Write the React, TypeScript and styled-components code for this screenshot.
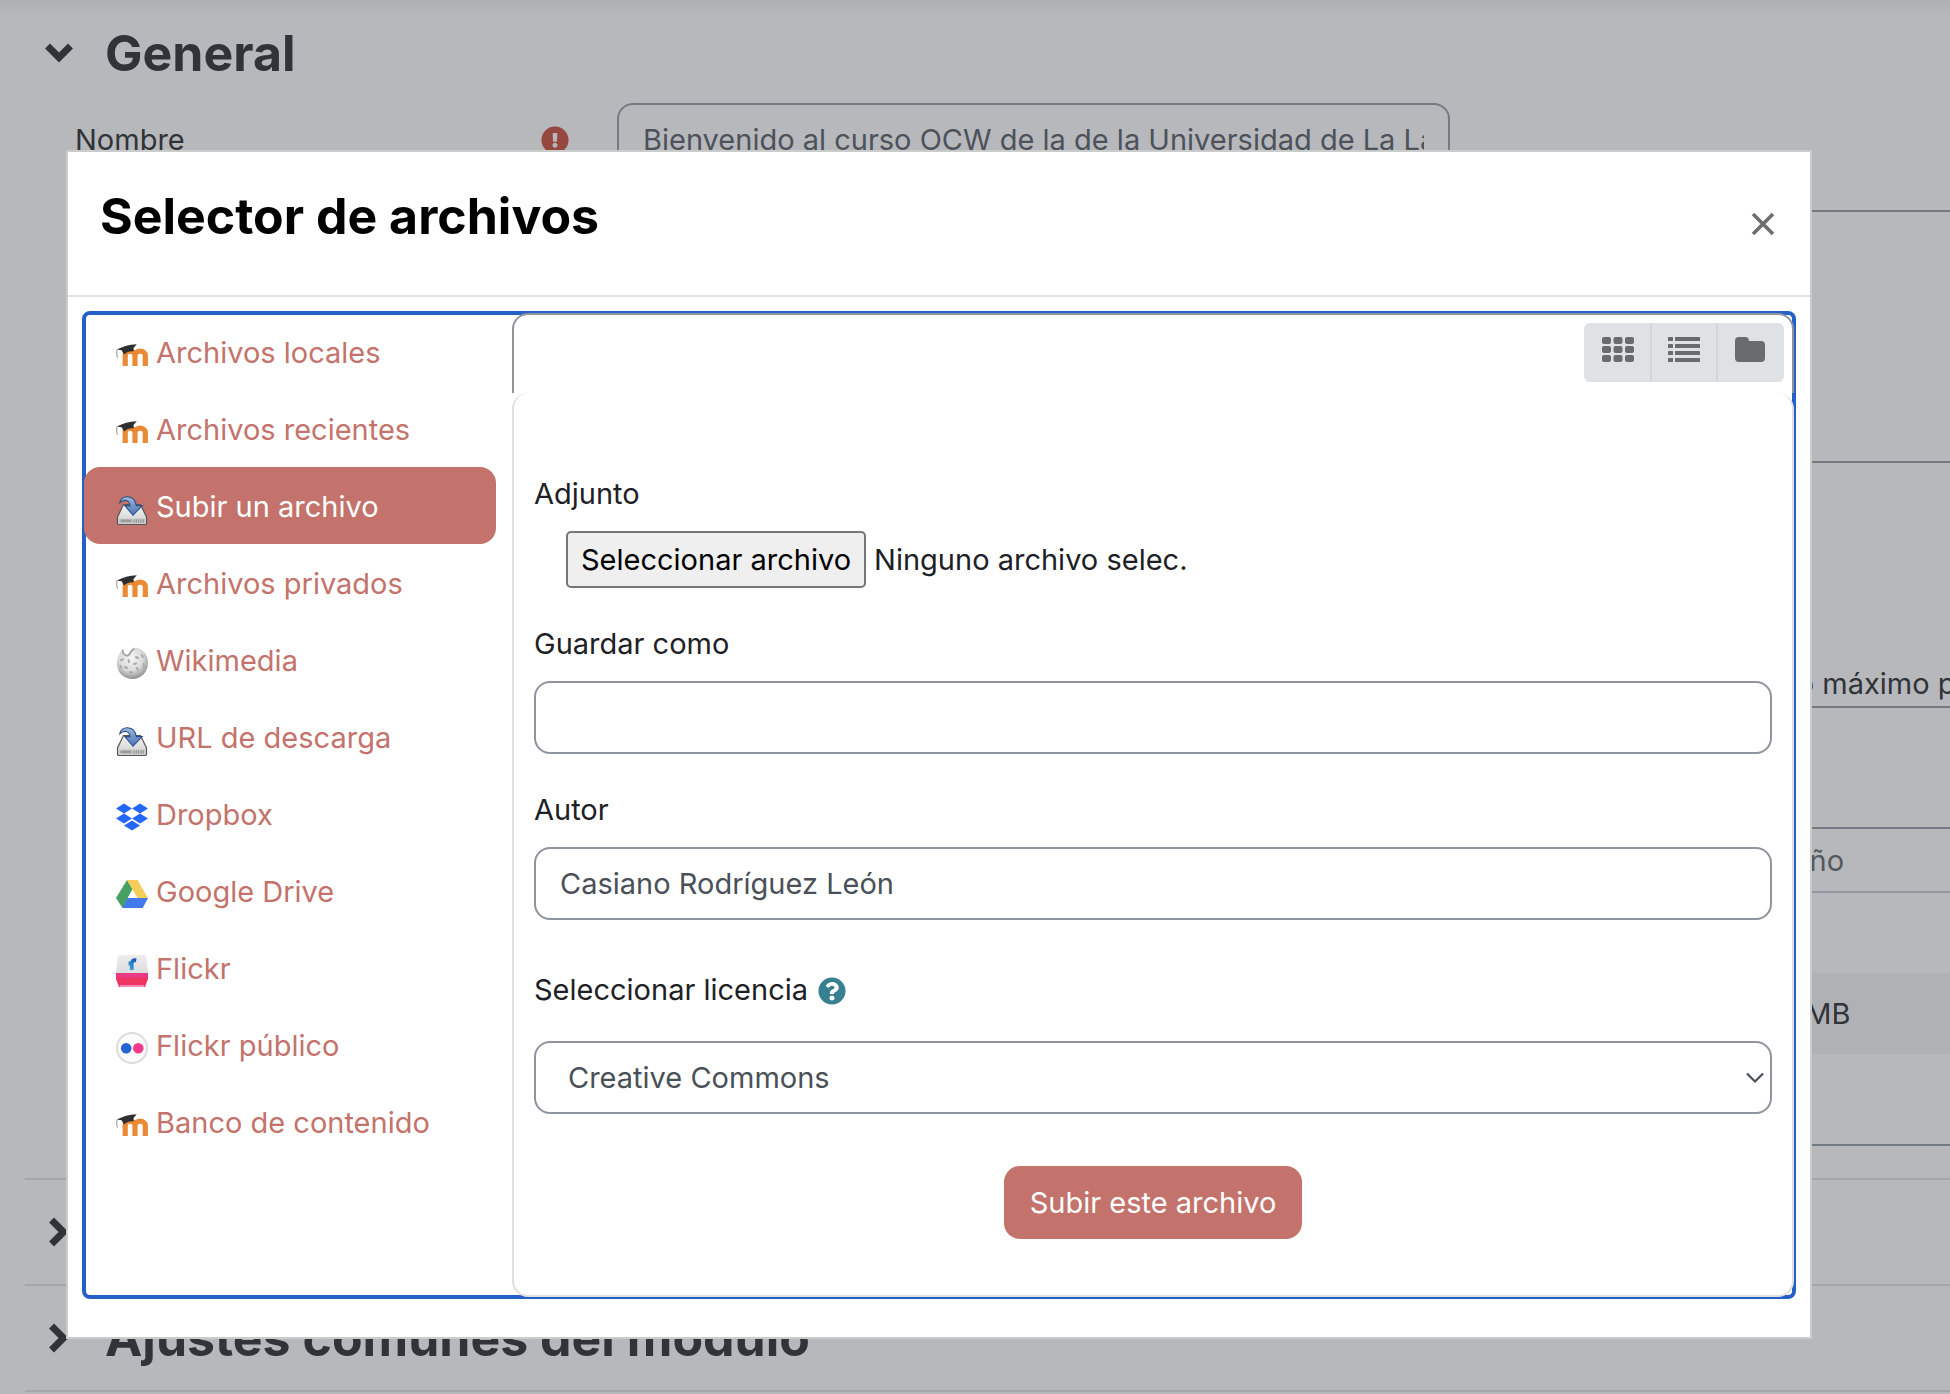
import React, { useState } from "react";
import styled, { createGlobalStyle } from "styled-components";
import { FaExclamationCircle, FaQuestionCircle } from "react-icons/fa";

const GlobalStyle = createGlobalStyle`
  *, *::before, *::after { box-sizing: border-box; }
  html, body { margin: 0; background: #b7b8bc; }
  body {
    font-family: Inter, "Liberation Sans", sans-serif;
    font-size: 29px;
    line-height: 45px;
    color: #1d2125;
    overflow: hidden;
  }
  input, select, button { font: inherit; }
`;

const accent = "#c3736b";
const fieldBorder = "#8f939e";
const dimBorder = "#747a82";
const dimRule = "#a4a6aa";
const dimText = "#303338";

const Page = styled.div`
  position: relative;
  min-height: 100vh;
  background: linear-gradient(#adaeb2, #b7b8bc 14px);
`;

/* ---------- settings form behind the dialog ---------- */

const Settings = styled.main`
  padding-left: 25px;
  color: ${dimText};
  overflow: hidden;
`;

const Section = styled.section<{ $ruled?: boolean }>`
  border-top: ${(p) => (p.$ruled ? `2px solid ${dimRule}` : "0")};
`;

const SectionHeader = styled.div<{ $open?: boolean }>`
  display: flex;
  align-items: center;
  gap: 27px;
  height: ${(p) => (p.$open ? 103 : 104)}px;
  padding-top: ${(p) => (p.$open ? 3 : 0)}px;
  padding-left: 17px;
`;

const SectionTitle = styled.h3`
  margin: 0;
  font-size: 50px;
  line-height: 64px;
  font-weight: 700;
  white-space: nowrap;
`;

const Toggle = styled.button`
  display: flex;
  align-items: center;
  justify-content: center;
  width: 36px;
  height: 36px;
  padding: 0;
  border: 0;
  background: none;
  color: inherit;
`;

const Fields = styled.div`
  display: grid;
  grid-template-columns: 494px 1fr;
  column-gap: 48px;
  padding: 0 0 32px 50px;
`;

const FieldName = styled.div`
  display: flex;
  align-items: center;
  justify-content: space-between;
  height: 73px;
`;

const Required = styled.span`
  display: flex;
  font-size: 28px;
  color: #96473f;
`;

const NameInput = styled.input`
  width: 833px;
  height: 73px;
  padding: 0 24px;
  border: 2px solid ${dimBorder};
  border-radius: 16px;
  background: transparent;
  color: #4c525a;
`;

const Wide = styled.div`
  grid-column: 2;
`;

const Editor = styled.div`
  height: 253px;
  margin-top: 34px;
  border: 2px solid ${dimBorder};
  border-right: 0;
`;

const SizeNote = styled.p`
  margin: 198px 0 0;
  padding-left: 1088px;
  white-space: nowrap;
`;

const FileManager = styled.div`
  border: 2px solid ${dimBorder};
  border-right: 0;
`;

const ManagerBar = styled.div`
  height: 121px;
  border-bottom: 2px solid ${dimBorder};
`;

const FileTable = styled.table`
  width: 100%;
  margin-bottom: 90px;
  border-collapse: collapse;
  table-layout: fixed;
  th, td { padding: 0; text-align: left; white-space: nowrap; }
  th { height: 63px; font-weight: 400; color: #54585e; border-bottom: 2px solid #929599; }
  td { height: 81px; }
  tbody tr:last-child { background: #b0b1b5; }
`;

const NameColumn = styled.col`
  width: 1116px;
`;

/* ---------- dialog ---------- */

const Overlay = styled.div`
  position: absolute;
  inset: 0;
  display: flex;
  align-items: flex-start;
  padding: 150px 138px 0 66px;
`;

const Dialog = styled.div`
  flex: 1;
  border: 2px solid #cacbcb;
  background: #fff;
`;

const DialogHeader = styled.header`
  display: flex;
  align-items: flex-start;
  justify-content: space-between;
  padding: 32px 23px 31px 32px;
  border-bottom: 2px solid #dee2e6;
`;

const DialogTitle = styled.h2`
  margin: 0;
  font-size: 50px;
  line-height: 64px;
  font-weight: 700;
  color: #000;
`;

const CloseButton = styled.button`
  display: flex;
  align-items: center;
  justify-content: center;
  width: 48px;
  height: 80px;
  padding: 0;
  border: 0;
  background: none;
`;

const DialogBody = styled.div`
  padding: 16px 16px 40px;
`;

const Picker = styled.div`
  display: flex;
  gap: 16px;
  border-radius: 6px;
  outline: 4px solid #2560c8;
  outline-offset: -2px;
`;

const Repositories = styled.nav`
  position: relative;
  width: 412px;
`;

const Repository = styled.a<{ $active: boolean }>`
  display: block;
  padding: 17px 32px 15px;
  border-radius: 16px;
  background: ${(p) => (p.$active ? accent : "transparent")};
  color: ${(p) => (p.$active ? "#fff" : accent)};
  text-decoration: none;
  white-space: nowrap;
  svg { width: 32px; height: 32px; margin-right: 8px; vertical-align: middle; }
`;

const Content = styled.div`
  position: relative;
  flex: 1;
  min-width: 0;
`;

const ViewBar = styled.div`
  display: flex;
  justify-content: flex-end;
  height: 80px;
  padding: 8px 8px 0;
  border: 2px solid ${fieldBorder};
  border-bottom: 0;
  border-radius: 16px 16px 0 0;
`;

const ViewGroup = styled.div`
  display: flex;
  height: 59px;
  padding-right: 2px;
  border-radius: 6px;
  background: #dee2e5;
  overflow: hidden;
`;

const ViewButton = styled.button`
  display: flex;
  align-items: flex-start;
  justify-content: center;
  width: 66px;
  padding: 14px 0 0;
  border: 0;
  border-left: 2px solid transparent;
  background: none;
  color: #6a6b6f;
  & + & { border-left-color: #d3d6d9; }
`;

const UploadForm = styled.form`
  display: flex;
  flex-direction: column;
  gap: 33px;
  padding: 78px 20px 56px;
  border: 2px solid #dfdfe0;
  border-top: 0;
  border-radius: 16px;
`;

const Field = styled.div`
  display: flex;
  flex-direction: column;
  gap: 15px;
`;

const LabelRow = styled.div`
  display: flex;
  align-items: center;
  gap: 10px;
  height: 73px;
`;

const HelpButton = styled.button`
  display: flex;
  padding: 2px 0 0;
  border: 0;
  background: none;
  font-size: 28px;
  color: #38808f;
`;

const FileRow = styled.div`
  display: flex;
  align-items: center;
  gap: 8px;
  padding-left: 32px;
`;

const HiddenFile = styled.input`
  position: absolute;
  width: 1px;
  height: 1px;
  opacity: 0;
`;

const FileButton = styled.label`
  padding: 4px 13px;
  border: 2px solid #767676;
  border-radius: 5px;
  background: #efefef;
  color: #000;
`;

const TextInput = styled.input`
  width: 100%;
  height: 73px;
  padding: 0 24px;
  border: 2px solid ${fieldBorder};
  border-radius: 16px;
  background: #fff;
  color: #495057;
`;

const SelectBox = styled.div`
  position: relative;
  svg { position: absolute; right: 7px; top: 30px; pointer-events: none; }
`;

const Select = styled.select`
  display: block;
  width: 100%;
  height: 73px;
  padding: 0 32px;
  appearance: none;
  border: 2px solid ${fieldBorder};
  border-radius: 16px;
  background: #fff;
  color: #495057;
`;

const Submit = styled.button`
  align-self: center;
  height: 73px;
  margin-top: 19px;
  padding: 0 26px;
  border: 0;
  border-radius: 16px;
  background: ${accent};
  color: #fff;
`;

/* ---------- drawings ---------- */

const Chevron = ({ down }: { down?: boolean }) => (
  <svg width="30" height="30" viewBox="0 0 30 30" fill="none" stroke="currentColor" strokeWidth="7" strokeLinecap="square" aria-hidden="true">
    <path d={down ? "M5 10.500l9 9 9-9" : "M9 5.500l9.500 9.500-9.500 9.500"} />
  </svg>
);

const MoodleIcon = () => (
  <svg viewBox="0 0 32 32" aria-hidden="true">
    <path d="M9.200 27V16.500C9.200 10.700 19 10.700 19 16.500V27M19 16.500C19 10.700 29.300 10.700 29.300 16.500V27" fill="none" stroke="#ea8a35" strokeWidth="5.200" />
    <path d="M.8 10.600C7 7.200 13 5.600 20.800 5.200L17.500 9l.2 3.300c-3.600-.4-7.400.8-9.700 3.200L5.600 11.200z" fill="#2f2f31" />
    <path d="M1.200 10.500c-.7 2.500-.7 5.500.3 8" fill="none" stroke="#8b7a6b" strokeWidth=".9" />
  </svg>
);

const DiskIcon = () => (
  <svg viewBox="0 0 32 32" aria-hidden="true">
    <defs>
      <linearGradient id="diskTop" x1="0" y1="0" x2="0" y2="1">
        <stop offset="0" stopColor="#f4f4f4" /><stop offset="1" stopColor="#cfcfcf" />
      </linearGradient>
      <linearGradient id="arrowBlue" x1="0" y1="0" x2="0" y2="1">
        <stop offset="0" stopColor="#9db8df" /><stop offset="1" stopColor="#4a73b3" />
      </linearGradient>
    </defs>
    <path d="M7.500 11.500h17L30.500 24v6.300q0 1.200-1.200 1.200H2.700q-1.200 0-1.200-1.200V24z" fill="url(#diskTop)" stroke="#55575a" strokeWidth="1.200" />
    <path d="M3 25.500h26v4.800H3z" fill="#c9c9c9" />
    <path d="M4.500 26.500h11v2.800h-11z" fill="#9b9b9b" />
    <path d="M18 26.300v3.400M20.300 26.300v3.400M22.600 26.300v3.400M24.900 26.300v3.400M27.200 26.300v3.400" stroke="#88898b" strokeWidth="1" />
    <path d="M3.800 9.800C4.500 1.600 18.600.8 20.300 12.600h5.900L17 22.300 8.800 12.600h5.200C13.300 7 8 5.600 3.800 9.800z" fill="url(#arrowBlue)" stroke="#2c4d86" strokeWidth="1.100" />
  </svg>
);

const WikimediaIcon = () => (
  <svg viewBox="0 0 32 32" aria-hidden="true">
    <defs>
      <radialGradient id="globe" cx=".45" cy=".35" r=".65">
        <stop offset="0" stopColor="#f5f5f5" /><stop offset=".6" stopColor="#dadada" /><stop offset="1" stopColor="#8f8f8f" />
      </radialGradient>
    </defs>
    <path d="M7 2.500c-1.500 3 1.500 6.500 4.500 6S14 3 19.500.6C27.500 2 32 9 32 16c0 9-7 16-15.500 16S1 25.500 1 17C1 11 3 5.500 7 2.500z" fill="url(#globe)" />
    <path d="M7 2.500c-1.500 3 1.500 6.500 4.500 6S14 3 18.500 1.500" fill="none" stroke="#a2a2a2" strokeWidth="1.800" />
    <path d="M5 13l2-.5M12.500 13l.5 2M20 10l2 1M25.500 8l1.500 2M9 20l2 1M4.500 19l.8 2M18 17l2-.5M21 21l.8 2M27.500 17l.5 3M14 25l2 .5" stroke="#a9a9a9" strokeWidth="2" strokeLinecap="round" />
  </svg>
);

const DropboxIcon = () => (
  <svg viewBox="0 0 32 32" fill="#2466f6" aria-hidden="true">
    <path d="M8 2.400l8 5-8 5-8-5zM24 2.400l8 5-8 5-8-5zM8 12.600l8 5-8 5-8-5zM24 12.600l8 5-8 5-8-5zM16 19.500l8 5-8 5-8-5z" />
  </svg>
);

const DriveIcon = () => (
  <svg viewBox="0 0 32 32" aria-hidden="true">
    <path d="M11 2l5.500 9L6.500 30 0 20z" fill="#46a061" />
    <path d="M11 2h10.500L32 20H21.500z" fill="#f5cd58" />
    <path d="M11.500 20H32l-5.300 10H6.200z" fill="#4379e8" />
    <path d="M16.300 12l4.500 8h-9z" fill="#fff" />
  </svg>
);

const FlickrIcon = () => (
  <svg viewBox="0 0 32 32" aria-hidden="true">
    <defs>
      <linearGradient id="flickrBlue" x1="0" y1="1" x2="1" y2="0">
        <stop offset="0" stopColor="#39b4e8" /><stop offset="1" stopColor="#1a53b0" />
      </linearGradient>
      <linearGradient id="flickrTop" x1="0" y1="0" x2="0" y2="1">
        <stop offset="0" stopColor="#ececed" /><stop offset="1" stopColor="#dddddf" />
      </linearGradient>
    </defs>
    <path d="M4 0h24q2 0 2.300 2L32 18H0L1.700 2Q2 0 4 0z" fill="url(#flickrTop)" />
    <path d="M0 18h32v6l-3 8H3l-3-8z" fill="#ee3562" />
    <path d="M0 18h32v4.500H0z" fill="#ea3a87" />
    <path d="M3.500 30h25l-1 2h-23z" fill="#f48bb8" />
    <path d="M15.700 15V9M12.500 8.500h5M15.700 9c0-3 1.500-4.200 4.500-3.600" fill="none" stroke="url(#flickrBlue)" strokeWidth="3.800" />
  </svg>
);

const FlickrPublicIcon = () => (
  <svg viewBox="0 0 32 32" aria-hidden="true">
    <circle cx="16" cy="16" r="15" fill="#fbfbfb" stroke="#dcdcdc" strokeWidth="2" />
    <circle cx="10.200" cy="16.300" r="5.300" fill="#2563d4" />
    <circle cx="22.300" cy="16.300" r="5.300" fill="#ef3b8a" />
  </svg>
);

const GridIcon = () => (
  <svg width="32" height="25" viewBox="0 0 32 25" fill="currentColor" aria-hidden="true">
    {[0, 9, 18].map((y) =>
      [0, 11.5, 23].map((x) => <rect key={`${x}-${y}`} x={x} y={y} width="9" height="7" rx="2" />)
    )}
  </svg>
);

const ListIcon = () => (
  <svg width="32" height="25" viewBox="0 0 32 25" fill="currentColor" aria-hidden="true">
    {[0, 7, 14, 21].map((y) => (
      <g key={y}>
        <rect x="0" y={y} width="5" height="4" rx=".5" />
        <rect x="7" y={y} width="25" height="4" rx=".5" />
      </g>
    ))}
  </svg>
);

const FolderIcon = () => (
  <svg width="30" height="25" viewBox="0 0 30 25" fill="currentColor" aria-hidden="true">
    <path d="M4 0h6q4 0 4 4h12q4 0 4 4v13q0 4-4 4H4q-4 0-4-4V4q0-4 4-4z" />
  </svg>
);

const repositories = [
  { name: "Archivos locales", Icon: MoodleIcon },
  { name: "Archivos recientes", Icon: MoodleIcon },
  { name: "Subir un archivo", Icon: DiskIcon },
  { name: "Archivos privados", Icon: MoodleIcon },
  { name: "Wikimedia", Icon: WikimediaIcon },
  { name: "URL de descarga", Icon: DiskIcon },
  { name: "Dropbox", Icon: DropboxIcon },
  { name: "Google Drive", Icon: DriveIcon },
  { name: "Flickr", Icon: FlickrIcon },
  { name: "Flickr público", Icon: FlickrPublicIcon },
  { name: "Banco de contenido", Icon: MoodleIcon },
];

export default function App() {
  const [active, setActive] = useState("Subir un archivo");

  return (
    <>
      <GlobalStyle />
      <Page>
        <Settings>
          <Section>
            <SectionHeader $open>
              <Toggle aria-label="Contraer General"><Chevron down /></Toggle>
              <SectionTitle>General</SectionTitle>
            </SectionHeader>
            <Fields>
              <FieldName>
                <label htmlFor="name">Nombre</label>
                <Required><FaExclamationCircle /></Required>
              </FieldName>
              <NameInput id="name" defaultValue="Bienvenido al curso OCW de la de la Universidad de La Laguna" />
              <Wide>
                <Editor />
                <SizeNote>Tamaño máximo para archivos nuevos</SizeNote>
                <FileManager>
                  <ManagerBar />
                  <FileTable>
                    <colgroup><NameColumn /><col /></colgroup>
                    <thead><tr><th /><th>Tamaño</th></tr></thead>
                    <tbody>
                      <tr><td /><td /></tr>
                      <tr><td /><td>48.2 MB</td></tr>
                    </tbody>
                  </FileTable>
                </FileManager>
              </Wide>
            </Fields>
          </Section>
          <Section $ruled>
            <SectionHeader>
              <Toggle aria-label="Expandir Apariencia"><Chevron /></Toggle>
              <SectionTitle>Apariencia</SectionTitle>
            </SectionHeader>
          </Section>
          <Section $ruled>
            <SectionHeader>
              <Toggle aria-label="Expandir Ajustes comunes del módulo"><Chevron /></Toggle>
              <SectionTitle>Ajustes comunes del módulo</SectionTitle>
            </SectionHeader>
          </Section>
          <Section $ruled />
        </Settings>

        <Overlay>
          <Dialog role="dialog" aria-labelledby="dialog-title">
            <DialogHeader>
              <DialogTitle id="dialog-title">Selector de archivos</DialogTitle>
              <CloseButton aria-label="Cerrar">
                <svg width="24" height="24" viewBox="0 0 24 24" fill="none" stroke="#6e6e6e" strokeWidth="3.600" aria-hidden="true">
                  <path d="M2 2l20 20M22 2L2 22" />
                </svg>
              </CloseButton>
            </DialogHeader>
            <DialogBody>
              <Picker>
                <Repositories>
                  {repositories.map(({ name, Icon }) => (
                    <Repository key={name} href="#" $active={name === active} onClick={() => setActive(name)}>
                      <Icon />{name}
                    </Repository>
                  ))}
                </Repositories>
                <Content>
                  <ViewBar>
                    <ViewGroup>
                      <ViewButton aria-label="Iconos"><GridIcon /></ViewButton>
                      <ViewButton aria-label="Lista"><ListIcon /></ViewButton>
                      <ViewButton aria-label="Árbol"><FolderIcon /></ViewButton>
                    </ViewGroup>
                  </ViewBar>
                  <UploadForm onSubmit={(e) => e.preventDefault()}>
                    <Field>
                      <label htmlFor="file">Adjunto</label>
                      <FileRow>
                        <HiddenFile id="file" type="file" />
                        <FileButton htmlFor="file">Seleccionar archivo</FileButton>
                        <span>Ninguno archivo selec.</span>
                      </FileRow>
                    </Field>
                    <Field>
                      <label htmlFor="saveas">Guardar como</label>
                      <TextInput id="saveas" />
                    </Field>
                    <Field>
                      <label htmlFor="author">Autor</label>
                      <TextInput id="author" defaultValue="Casiano Rodríguez León" />
                    </Field>
                    <Field>
                      <LabelRow>
                        <label htmlFor="license">Seleccionar licencia</label>
                        <HelpButton type="button" aria-label="Ayuda"><FaQuestionCircle /></HelpButton>
                      </LabelRow>
                      <SelectBox>
                        <Select id="license"><option>Creative Commons</option></Select>
                        <svg width="20" height="14" viewBox="0 0 20 14" fill="none" stroke="#495057" strokeWidth="2.200" aria-hidden="true">
                          <path d="M2 2.500l8 8 8-8" />
                        </svg>
                      </SelectBox>
                    </Field>
                    <Submit type="submit">Subir este archivo</Submit>
                  </UploadForm>
                </Content>
              </Picker>
            </DialogBody>
          </Dialog>
        </Overlay>
      </Page>
    </>
  );
}
